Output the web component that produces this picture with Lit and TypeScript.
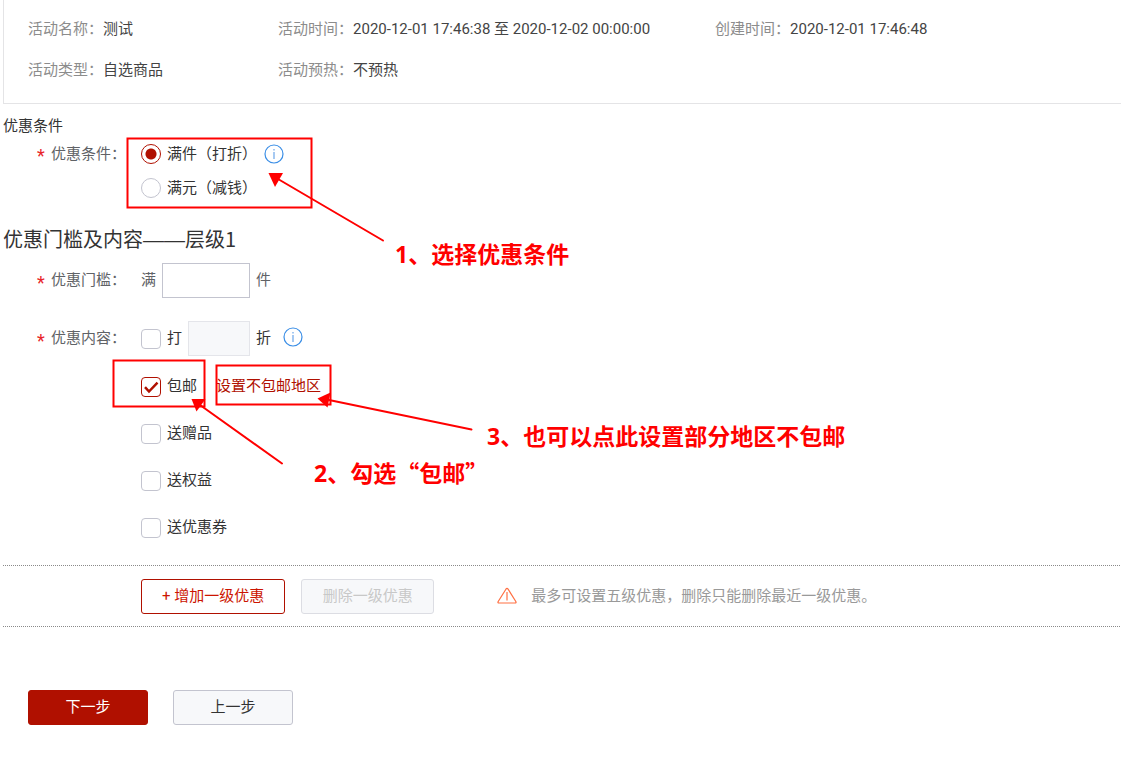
import { LitElement, html, css, svg } from "lit";
import { customElement, state } from "lit/decorators.js";

interface Benefit {
  id: string;
  label: string;
  checked: boolean;
  link?: string;
}

const facts = [
  ["活动名称：", "测试"],
  ["活动时间：", "2020-12-01 17:46:38 至 2020-12-02 00:00:00"],
  ["创建时间：", "2020-12-01 17:46:48"],
  ["活动类型：", "自选商品"],
  ["活动预热：", "不预热"],
];

const benefits: Benefit[] = [
  { id: "free-shipping", label: "包邮", checked: true, link: "设置不包邮地区" },
  { id: "gift", label: "送赠品", checked: false },
  { id: "rights", label: "送权益", checked: false },
  { id: "coupon", label: "送优惠券", checked: false },
];

const infoIcon = html`<svg class="info" viewBox="0 0 20 20" aria-hidden="true">
  <circle cx="10" cy="10" r="9" fill="none" stroke="#3a8ee6" stroke-width="1.2" />
  <path d="M10 5v1.4M10 8v7" fill="none" stroke="#6ba6ea" stroke-width="1.2" />
</svg>`;

@customElement("app-root")
export class AppRoot extends LitElement {
  @state() private condition = "count";

  static styles = css`
    :host {
      display: block;
      position: relative;
      min-height: 100vh;
      box-sizing: border-box;
      padding-left: 3px;
      overflow: hidden;
      background: #fff;
      color: #333;
      font-family: Roboto, "Noto Sans CJK SC", sans-serif;
      font-size: 15px;
      line-height: 35px;
    }
    * {
      box-sizing: border-box;
    }
    .facts {
      display: grid;
      grid-template-columns: 250px 437px 1fr;
      margin: 0;
      padding: 9px 0 12px 24px;
      border-left: 1px solid #e4e4e6;
      border-bottom: 1px solid #e4e4e6;
      line-height: 41px;
    }
    .fact {
      display: flex;
      white-space: nowrap;
    }
    .fact dt {
      color: #8c8c8c;
    }
    .fact dd {
      margin: 0;
      color: #444;
    }
    h2,
    h3 {
      margin: 0;
      font-weight: 400;
    }
    h2 {
      margin-top: 11px;
      font-size: 15px;
      line-height: 22px;
    }
    h3 {
      margin-top: 20px;
      font-family: "Noto Sans CJK SC", sans-serif;
      font-size: 20px;
      line-height: 28px;
    }
    .dash {
      font-family: "Liberation Sans", sans-serif;
      font-size: 21px;
      line-height: 20px;
    }
    .field {
      display: grid;
      grid-template-columns: 138px 1fr;
      color: #606266;
    }
    .name {
      display: flex;
      gap: 6px;
      padding-left: 34px;
    }
    .star {
      width: 8px;
      margin: 2px 0 -2px;
      color: #e8252a;
      font-size: 18px;
    }
    .conditions {
      line-height: 34px;
    }
    .conditions .info {
      margin: 0 0 0 7px;
    }
    .threshold {
      margin-top: 10px;
    }
    .content {
      margin-top: 23px;
    }
    .stack {
      display: flex;
      flex-direction: column;
      gap: 12px;
    }
    .line {
      display: flex;
      align-items: center;
    }
    .discount {
      margin-bottom: 1px;
    }
    .option {
      display: flex;
      align-items: center;
      gap: 6px;
      color: #333;
    }
    .tick {
      appearance: none;
      width: 20px;
      height: 20px;
      margin: 0;
      border: 1px solid #c3c4cf;
      border-radius: 4px;
      background: #fff center / 18px 18px no-repeat;
    }
    .tick:checked {
      border-color: #b01000;
      background-image: url("data:image/svg+xml,%3Csvg xmlns='http://www.w3.org/2000/svg' viewBox='0 0 18 18'%3E%3Cpath d='M3 9.2l4 4.3L15.5 4.600' fill='none' stroke='%23b01000' stroke-width='2.5'/%3E%3C/svg%3E");
    }
    .tick.round {
      border-radius: 50%;
    }
    .tick.round:checked {
      background-image: radial-gradient(circle, #b01000 5px, transparent 6px);
    }
    .info {
      display: block;
      width: 20px;
      height: 20px;
      margin: 0 0 3px 12px;
    }
    .box {
      width: 88px;
      height: 35px;
      margin: 0 6px;
      padding: 0 8px;
      border: 1px solid #c3c4cf;
      background: #fff;
      font: inherit;
    }
    .box:disabled {
      width: 62px;
      border-color: #e4e5ea;
      background: #f7f8fa;
    }
    .link {
      margin-left: 19px;
      color: #b01000;
      text-decoration: none;
    }
    .levels {
      display: flex;
      align-items: center;
      margin: 20px 1px 0 0;
      padding: 13px 0 12px 138px;
      border-top: 1px dotted #8a8a8a;
      border-bottom: 1px dotted #8a8a8a;
      color: #999;
    }
    button {
      height: 35px;
      padding: 0 20px;
      border: 1px solid #c3c4cf;
      border-radius: 3px;
      background: #f7f8fa;
      color: #333;
      font: inherit;
      line-height: 31px;
      white-space: nowrap;
    }
    .add {
      border-color: #b01000;
      background: #fff;
      color: #cc1400;
    }
    .remove {
      min-width: 133px;
      margin-left: 16px;
      border-color: #dcdde3;
      color: #c8c8c8;
    }
    .warn {
      flex: none;
      width: 20px;
      height: 18px;
      margin: 0 14px 2px 63px;
    }
    .actions {
      display: flex;
      gap: 25px;
      padding: 63px 0 35px 25px;
    }
    .actions button {
      width: 120px;
    }
    .actions .primary {
      border-color: #b01000;
      background: #b01000;
      color: #fff;
    }
    .marks {
      position: absolute;
      top: 0;
      left: 0;
      width: 1121px;
      height: 760px;
      pointer-events: none;
    }
    .note {
      position: absolute;
      margin: 0;
      color: #f00;
      font: 700 23px/34px "Noto Sans CJK SC", sans-serif;
      white-space: nowrap;
    }
    .digit {
      font-family: "Open Sans", sans-serif;
    }
    .note-1 {
      left: 395px;
      top: 236px;
    }
    .note-2 {
      left: 314px;
      top: 455px;
    }
    .note-3 {
      left: 487px;
      top: 418px;
    }
  `;

  private name(text: string, target?: string) {
    return html`<span class="name"
      ><span class="star">*</span>${target ? html`<label for=${target}>${text}</label>` : html`<span>${text}</span>`}</span
    >`;
  }

  private radio(value: string, text: string) {
    return html`<label class="option"
      ><input
        class="tick round"
        type="radio"
        name="condition"
        .checked=${this.condition === value}
        @change=${() => (this.condition = value)}
      />${text}</label
    >`;
  }

  private arrow(x1: number, y1: number, x2: number, y2: number, head: string) {
    return svg`<line x1=${x1} y1=${y1} x2=${x2} y2=${y2} stroke-linecap="round" /><polygon points=${head} fill="#f00" stroke="none" />`;
  }

  render() {
    return html`
      <dl class="facts">
        ${facts.map(([k, v]) => html`<div class="fact"><dt>${k}</dt><dd>${v}</dd></div>`)}
      </dl>

      <h2>优惠条件</h2>
      <div class="field conditions" role="radiogroup" aria-label="优惠条件">
        ${this.name("优惠条件：")}
        <div>
          <div class="line">${this.radio("count", "满件（打折）")}${infoIcon}</div>
          <div class="line">${this.radio("amount", "满元（减钱）")}</div>
        </div>
      </div>

      <h3>优惠门槛及内容<span class="dash">——</span>层级1</h3>
      <div class="field threshold">
        ${this.name("优惠门槛：", "threshold")}
        <div class="line"><span>满</span><input class="box" id="threshold" type="text" /><span>件</span></div>
      </div>
      <div class="field content">
        ${this.name("优惠内容：")}
        <div class="stack">
          <div class="line discount">
            <label class="option"><input class="tick" type="checkbox" />打</label>
            <input class="box" type="text" aria-label="折" disabled />
            <span class="option">折</span>${infoIcon}
          </div>
          ${benefits.map(
            (b) => html`<div class="line">
              <label class="option"><input class="tick" type="checkbox" id=${b.id} .checked=${b.checked} />${b.label}</label>
              ${b.link ? html`<a class="link" href="#">${b.link}</a>` : ""}
            </div>`
          )}
        </div>
      </div>

      <div class="levels">
        <button class="add" type="button">+ 增加一级优惠</button>
        <button class="remove" type="button" disabled>删除一级优惠</button>
        <svg class="warn" viewBox="0 0 20 18" aria-hidden="true">
          <path d="M8.900 2.200 1.200 14.500Q.400 16 2 16H18Q19.600 16 18.800 14.500L11.100 2.200Q10 .700 8.900 2.200Z" fill="none" stroke="#ff7043" stroke-width="1.200" />
          <path d="M10 5v8.500" fill="none" stroke="#ff7043" stroke-width="1.200" />
        </svg>
        <span>最多可设置五级优惠，删除只能删除最近一级优惠。</span>
      </div>

      <div class="actions">
        <button class="primary" type="button">下一步</button>
        <button type="button">上一步</button>
      </div>

      <svg class="marks" viewBox="0 0 1121 760" fill="none" stroke="#f00" stroke-width="2" aria-hidden="true">
        <rect x="127.500" y="138.500" width="184" height="69" />
        <rect x="113.500" y="360.500" width="91" height="46" />
        <rect x="216.500" y="365.500" width="114" height="39" />
        ${this.arrow(383, 240.5, 278, 179, "268.500,173 283,173 275,187")}
        ${this.arrow(282, 463.5, 200, 405, "191.500,399 205.500,399 196.500,411.500")}
        ${this.arrow(471.5, 429.5, 329, 400, "317.500,398.500 330.500,392.500 327.500,407.500")}
      </svg>
      <p class="note note-1"><span class="digit">1</span>、选择优惠条件</p>
      <p class="note note-2"><span class="digit">2</span>、勾选“包邮”</p>
      <p class="note note-3"><span class="digit">3</span>、也可以点此设置部分地区不包邮</p>
    `;
  }
}
